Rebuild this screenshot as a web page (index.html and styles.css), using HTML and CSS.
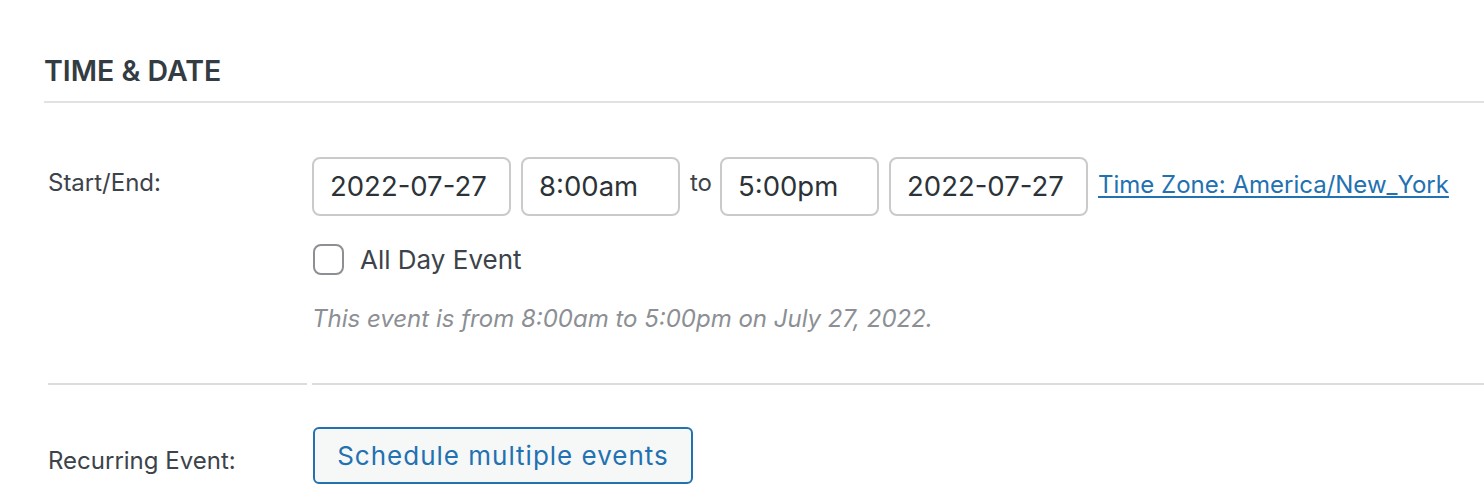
FILE: index.html
```html
<!DOCTYPE html>
<html lang="en">
<head>
<meta charset="utf-8">
<title>Time &amp; Date</title>
<link rel="stylesheet" href="styles.css">
</head>
<body>
<div class="panel">
  <h2 class="panel-title">TIME &amp; DATE</h2>
  <div class="form">
    <div class="row row-first">
      <div class="label label-start">Start/End:</div>
      <div class="value value-first">
        <div class="inputs">
          <div class="field field-date">2022-07-27</div>
          <div class="field field-time">8:00am</div>
          <span class="to">to</span>
          <div class="field field-time">5:00pm</div>
          <div class="field field-date">2022-07-27</div>
          <a class="tz" href="#">Time Zone: America/New_York</a>
        </div>
        <label class="allday">
          <span class="checkbox"></span>
          <span class="allday-text">All Day Event</span>
        </label>
        <p class="desc">This event is from 8:00am to 5:00pm on July 27, 2022.</p>
      </div>
    </div>
    <div class="row row-second">
      <div class="label label-recurring">Recurring Event:</div>
      <div class="value value-second">
        <button class="btn" type="button">Schedule multiple events</button>
      </div>
    </div>
  </div>
</div>
</body>
</html>
```
FILE: styles.css
```css
html, body {
  margin: 0;
  padding: 0;
  background: #ffffff;
}
body {
  font-family: Inter, "Noto Sans", "Liberation Sans", sans-serif;
  color: #2c3338;
  width: 1484px;
  height: 502px;
  overflow: hidden;
}
.panel {
  padding-left: 44px;
}
.panel-title {
  margin: 0;
  padding: 51px 0 10px 0;
  font-size: 28.5px;
  line-height: 40px;
  font-weight: 600;
  color: #333b43;
  border-bottom: 2px solid #e2e2e4;
}
.form {
  padding-left: 4px;
}
.row {
  display: grid;
  grid-template-columns: 259px 1fr;
  column-gap: 5px;
}
.row-first .label,
.row-first .value {
  border-bottom: 2px solid #dcdcde;
}
.label {
  font-size: 24px;
  color: #3c434a;
  line-height: 36px;
}
.label-start {
  padding-top: 62px;
}
.label-recurring {
  padding-top: 58px;
}
.value-first {
  padding-top: 54px;
  padding-bottom: 46px;
}
.value-second {
  padding-top: 42px;
}
.inputs {
  display: flex;
  align-items: center;
}
.field {
  box-sizing: border-box;
  height: 59px;
  border: 2px solid #c9cacc;
  border-radius: 8px;
  padding: 0 16px;
  font-size: 27.5px;
  line-height: 55px;
  color: #2c3338;
  margin-right: 10px;
}
.field-date { width: 199px; }
.field-time { width: 159px; }
.to {
  font-size: 24px;
  color: #3c434a;
  margin: -8px 8px 0 0;
}
.tz {
  font-size: 24px;
  color: #2271b1;
  text-decoration: underline;
  text-underline-offset: 3px;
  margin-top: -4px;
}
.allday {
  display: flex;
  align-items: center;
  margin-top: 28px;
  height: 31px;
}
.checkbox {
  box-sizing: border-box;
  width: 31px;
  height: 31px;
  border: 2px solid #8c8f94;
  border-radius: 8px;
  margin-left: 1px;
}
.allday-text {
  font-size: 26px;
  margin-left: 16px;
  color: #3c434a;
}
.desc {
  margin: 26px 0 0 0;
  font-size: 24px;
  font-style: italic;
  line-height: 36px;
  color: #8c8f94;
}
.btn {
  box-sizing: border-box;
  width: 380px;
  height: 57px;
  border: 2px solid #2271b1;
  border-radius: 6px;
  background: #f6f7f7;
  color: #2271b1;
  font-family: inherit;
  font-size: 26px;
  letter-spacing: 1px;
  padding: 0;
  margin-left: 1px;
}
```
